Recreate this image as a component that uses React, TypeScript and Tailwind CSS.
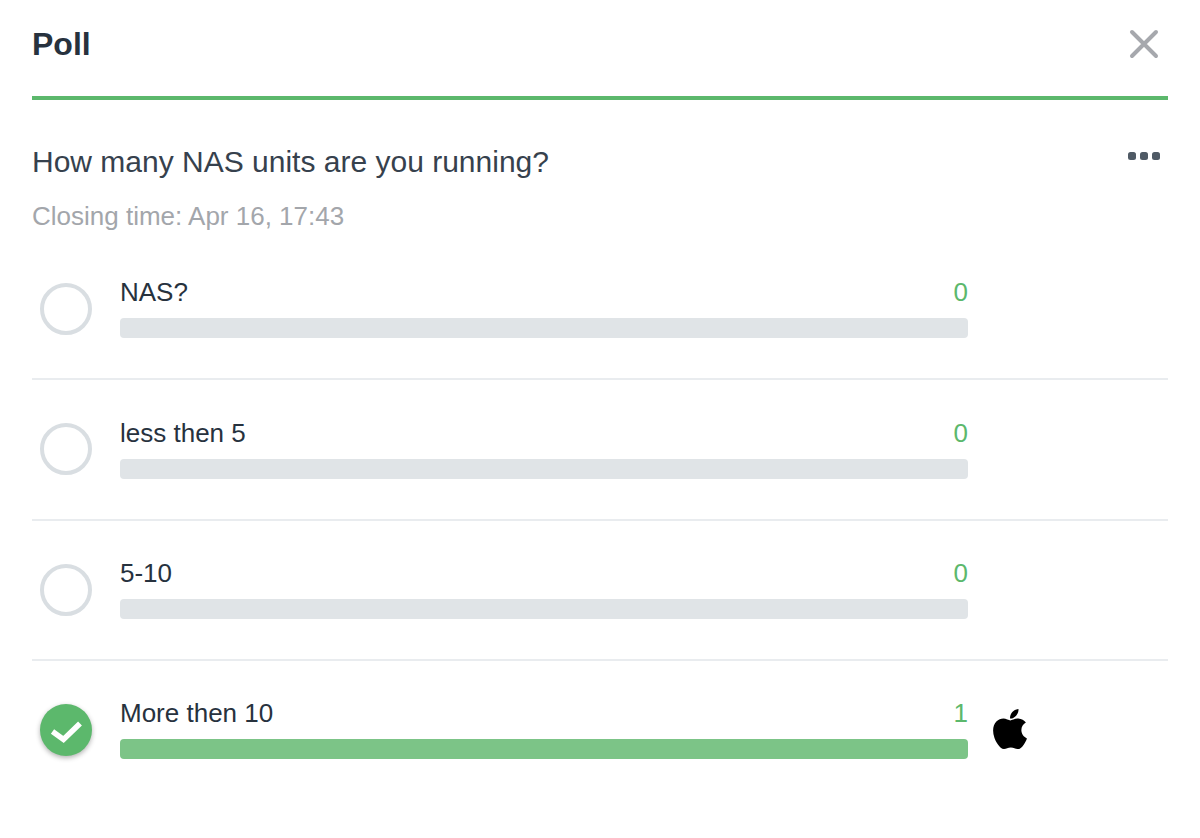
import { FaApple } from 'react-icons/fa';

const options = [
  { label: 'NAS?', votes: 0 },
  { label: 'less then 5', votes: 0 },
  { label: '5-10', votes: 0 },
  { label: 'More then 10', votes: 1, selected: true },
];

export default function App() {
  return (
    <div className="w-[1200px] h-[838px] bg-white px-8 font-['Liberation_Sans',Arial,sans-serif] overflow-hidden">
      <header className="h-[100px] border-b-4 border-[#5cb86c] flex items-start justify-between">
        <h1 className="mt-[25px] text-[32px] leading-[38px] font-bold text-[#27323e]">Poll</h1>
        <svg width="32" height="32" viewBox="0 0 32 32" className="mt-7 mr-2" fill="none">
          <path d="M4 4 L28 28 M28 4 L4 28" stroke="#a6a8ad" strokeWidth="4" strokeLinecap="round" />
        </svg>
      </header>

      <div className="flex items-start justify-between">
        <h2 className="mt-[44px] text-[30px] leading-[36px] text-[#36414d]">How many NAS units are you running?</h2>
        <div className="mt-[52px] mr-2 flex gap-1">
          <span className="w-2 h-2 rounded-[2.5px] bg-[#4f5a65]" />
          <span className="w-2 h-2 rounded-[2.5px] bg-[#4f5a65]" />
          <span className="w-2 h-2 rounded-[2.5px] bg-[#4f5a65]" />
        </div>
      </div>
      <p className="mt-[21px] text-[26px] leading-[30px] text-[#a3a6ab]">Closing time: Apr 16, 17:43</p>

      <div className="mt-[9px]">
        {options.map((o, i) => (
          <div key={o.label} className={`h-[140.33px] flex pt-[34.2px] ${i < 3 ? 'border-b-2 border-[#e9ecef]' : ''}`}>
            <div className="w-[88px] pl-2 pt-[8.8px] shrink-0">
              {o.selected ? (
                <div className="w-[52px] h-[52px] rounded-full bg-[#5cb86c] shadow-[0_2px_5px_rgba(0,0,0,0.3)] flex items-center justify-center">
                  <svg width="34" height="28" viewBox="0 0 34 28" fill="none">
                    <path d="M3.5 15.5 L14.5 23.5 L31 7.5" stroke="#fff" strokeWidth="5.5" />
                  </svg>
                </div>
              ) : (
                <div className="w-[52px] h-[52px] rounded-full border-[4px] border-[#d9dee2]" />
              )}
            </div>
            <div className="w-[848px] shrink-0">
              <div className="flex justify-between text-[26px] leading-[36px]">
                <span className="text-[#27323e]">{o.label}</span>
                <span className="text-[#5cb86c]">{o.votes}</span>
              </div>
              <div className={`mt-2 h-5 rounded-[4px] ${o.selected ? 'bg-[#7cc487]' : 'bg-[#e0e4e7]'}`} />
            </div>
            {o.selected && <FaApple className="ml-[19px] mt-[11.3px] text-black" size={46} />}
          </div>
        ))}
      </div>
    </div>
  );
}
